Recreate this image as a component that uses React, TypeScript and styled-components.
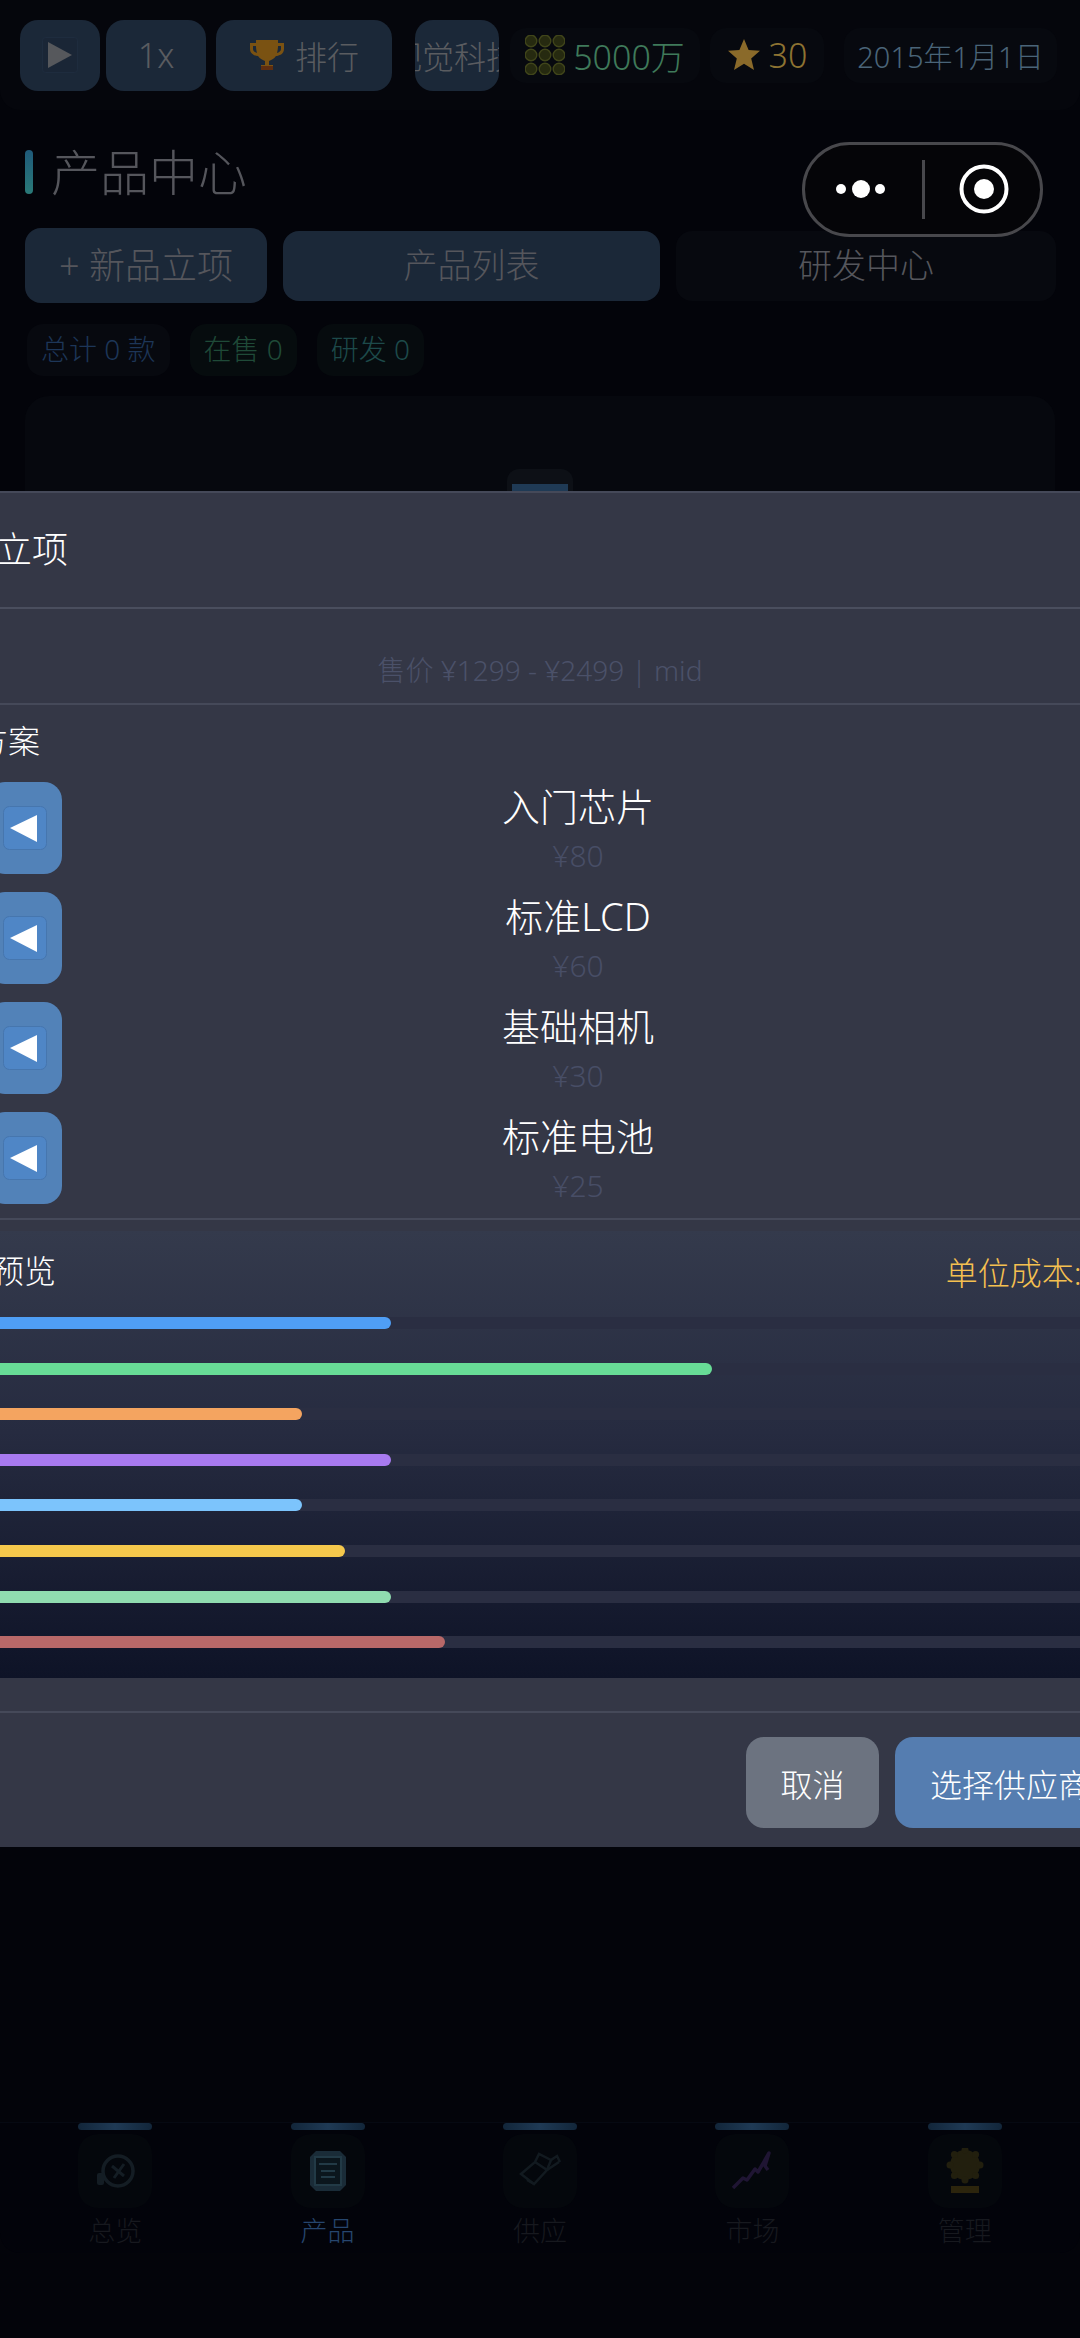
import React from 'react';
import styled, {createGlobalStyle} from 'styled-components';

const GlobalStyle = createGlobalStyle`
  html, body {
    margin: 0;
    padding: 0;
    background: #03040a;
    overflow: hidden;
  }
  * {
    box-sizing: border-box;
  }
  body {
    font-family: "Noto Sans", "Noto Sans CJK SC", sans-serif;
    font-weight: 300;
  }
`;

const Page = styled.div`
  position: relative;
  width: 1080px;
  height: 2338px;
  overflow: hidden;
  display: flex;
  flex-direction: column;
  background: #03040a;
`;

const TopBar = styled.div`
  height: 110px;
  flex: none;
  display: flex;
  align-items: center;
  padding-left: 20px;
  background: #05060c;
  border-radius: 0 0 20px 20px;
`;

const BarButton = styled.div<{$w: number; $ml?: number; $size?: number}>`
  width: ${p => p.$w}px;
  margin-left: ${p => p.$ml ?? 0}px;
  height: 71px;
  flex: none;
  display: flex;
  align-items: center;
  justify-content: center;
  gap: 10px;
  border-radius: 18px;
  background: #1b2838;
  color: #5a5c60;
  font-size: ${p => p.$size ?? 32}px;
  overflow: hidden;
  white-space: nowrap;
`;

const ScrollText = styled.span`
  margin-left: -6px;
`;

const StatPill = styled.div<{$w: number; $ml: number; $color: string}>`
  width: ${p => p.$w}px;
  margin-left: ${p => p.$ml}px;
  height: 55px;
  flex: none;
  display: flex;
  align-items: center;
  justify-content: center;
  gap: 8px;
  border-radius: 16px;
  background: #07090f;
  color: ${p => p.$color};
  font-size: 34px;
  white-space: nowrap;
`;

const DateText = styled.span`
  font-size: 29px;
`;

const TitleRow = styled.div`
  height: 44px;
  margin: 40px 0 0 25px;
  flex: none;
  display: flex;
  align-items: center;
  gap: 18px;
`;

const TitleMark = styled.div`
  width: 8px;
  height: 44px;
  border-radius: 4px;
  background: linear-gradient(180deg, #1f5a7a, #2a7a78);
`;

const TitleText = styled.div`
  font-size: 49px;
  line-height: 44px;
  color: #55565c;
`;

const TabRow = styled.div`
  margin: 34px 24px 0 25px;
  height: 75px;
  flex: none;
  display: flex;
  align-items: center;
  gap: 16px;
`;

const Tab = styled.div<{$w: number; $tall?: boolean; $dark?: boolean}>`
  width: ${p => p.$w}px;
  height: ${p => (p.$tall ? 75 : 70)}px;
  flex: none;
  display: flex;
  align-items: center;
  justify-content: center;
  padding-bottom: 4px;
  border-radius: 16px;
  background: ${p => (p.$dark ? '#07090f' : '#1b2838')};
  color: #55565c;
  font-size: ${p => (p.$tall ? 36 : 34)}px;
`;

const ChipRow = styled.div`
  margin: 21px 0 0 27px;
  height: 52px;
  flex: none;
  display: flex;
  gap: 20px;
`;

const Chip = styled.div<{$color: string; $bg: string}>`
  padding: 0 14px 4px;
  display: flex;
  align-items: center;
  border-radius: 16px;
  background: ${p => p.$bg};
  color: ${p => p.$color};
  font-size: 28px;
  white-space: pre;
`;

const EmptyCard = styled.div`
  margin: 20px 25px 0;
  height: 500px;
  flex: none;
  display: flex;
  justify-content: center;
  padding-top: 73px;
  border-radius: 24px;
  background: #06080e;
`;

const EmptyIcon = styled.div`
  width: 66px;
  height: 40px;
  display: flex;
  justify-content: center;
  padding-top: 15px;
  border-radius: 12px;
  background: #0d1016;
`;

const EmptyIconFill = styled.div`
  width: 56px;
  height: 25px;
  background: #1f3a55;
`;

const TabBar = styled.div`
  margin-top: auto;
  margin-bottom: 85px;
  height: 131px;
  flex: none;
  display: flex;
  padding: 0 9px;
  border-top: 1px solid #060912;
  border-radius: 0 0 20px 20px;
  background: #02030a;
`;

const TabItem = styled.div`
  flex: 1;
  display: flex;
  flex-direction: column;
  align-items: center;
`;

const TabIndicator = styled.div`
  width: 74px;
  height: 7px;
  flex: none;
  border-radius: 4px;
  background: linear-gradient(90deg, #12263a, #1f3a55, #12263a);
`;

const TabTile = styled.div`
  margin-top: 4px;
  width: 74px;
  height: 74px;
  flex: none;
  display: flex;
  align-items: center;
  justify-content: center;
  border-radius: 20px;
  background: #04070c;
`;

const TabLabel = styled.div<{$active?: boolean}>`
  margin-top: 5px;
  font-size: 27px;
  line-height: 36px;
  color: ${p => (p.$active ? '#26466e' : '#17191f')};
`;

const Capsule = styled.div`
  position: absolute;
  top: 142px;
  left: 802px;
  width: 241px;
  height: 95px;
  border-radius: 48px;
  border: 3px solid #48484c;
  background: #050508;
  z-index: 3;
`;

const Modal = styled.div`
  position: absolute;
  top: 491px;
  left: -120px;
  width: 1320px;
  height: 1356px;
  display: flex;
  flex-direction: column;
  background: #343746;
  border-top: 2px solid #454959;
  z-index: 2;
`;

const ModalHeader = styled.div`
  height: 116px;
  flex: none;
  display: flex;
  align-items: center;
  padding: 0 0 5px 44px;
  border-bottom: 2px solid #4a4e5e;
  color: #ffffff;
  font-size: 36px;
`;

const ModalInfo = styled.div`
  height: 96px;
  flex: none;
  display: flex;
  align-items: flex-end;
  justify-content: center;
  padding-bottom: 14px;
  border-bottom: 2px solid #454959;
  color: #4b5169;
  font-size: 28px;
`;

const Section = styled.div`
  flex: none;
  padding: 14px 0 0 32px;
  height: 515px;
  border-bottom: 2px solid #454959;
`;

const SectionLabel = styled.div`
  height: 44px;
  line-height: 44px;
  font-size: 32px;
  color: #ffffff;
`;

const OptionList = styled.div`
  margin-top: 19px;
  display: flex;
  flex-direction: column;
  gap: 18px;
`;

const OptionRow = styled.div`
  width: 1182px;
  margin-left: 75px;
  height: 92px;
  display: flex;
  align-items: center;
`;

const ArrowButton = styled.div`
  width: 75px;
  height: 92px;
  flex: none;
  display: flex;
  align-items: center;
  justify-content: center;
  border-radius: 18px;
  background: #5282b8;
`;

const OptionText = styled.div`
  flex: 1;
  display: flex;
  flex-direction: column;
  align-items: center;
  justify-content: flex-start;
  align-self: flex-start;
`;

const OptionName = styled.div`
  margin-top: -2px;
  font-size: 38px;
  line-height: 52px;
  color: #ffffff;
`;

const OptionPrice = styled.div`
  font-size: 30px;
  line-height: 48px;
  color: #484e66;
`;

const PreviewPanel = styled.div`
  margin-top: 11px;
  height: 447px;
  flex: none;
  padding: 18px 37px 0 48px;
  background: linear-gradient(180deg, #343a4c 0%, #262b40 45%, #0e1327 100%);
`;

const PreviewHead = styled.div`
  height: 44px;
  display: flex;
  align-items: center;
  justify-content: space-between;
  white-space: nowrap;
`;

const CostText = styled.div`
  font-size: 32px;
  color: #f5c050;
`;

const BarList = styled.div`
  margin-top: 24px;
  display: flex;
  flex-direction: column;
  gap: 33.6px;
`;

const BarTrack = styled.div`
  height: 12px;
  border-radius: 6px;
  background: #2a2e42;
  overflow: hidden;
`;

const BarFill = styled.div<{$color: string}>`
  height: 100%;
  border-radius: 6px;
  background: ${p => p.$color};
`;

const ModalFooter = styled.div`
  margin-top: 33px;
  flex: 1;
  display: flex;
  justify-content: flex-end;
  gap: 16px;
  padding: 24px 75px 0 0;
  border-top: 2px solid #454959;
`;

const FooterButton = styled.div<{$bg: string; $w: number}>`
  width: ${p => p.$w}px;
  height: 91px;
  display: flex;
  align-items: center;
  justify-content: center;
  border-radius: 18px;
  background: ${p => p.$bg};
  color: #ffffff;
  font-size: 32px;
`;

const PlayIcon = () => (
  <svg width="36" height="36" viewBox="0 0 36 36">
    <rect x="0.5" y="0.5" width="35" height="35" rx="3" fill="#1a2636" stroke="#1e2c3e" />
    <path d="M6 5 L30 18 L6 31 Z" fill="#56585c" />
  </svg>
);

const TrophyIcon = () => (
  <svg width="36" height="36" viewBox="0 0 36 36">
    <path
      d="M7 3 H29 V6 H35 V12 C35 17 30 19 27 19 C25 22 22 23 20 24 V28 H24 V33 H12 V28 H16 V24 C14 23 11 22 9 19 C6 19 1 17 1 12 V6 H7 Z M4 9 V12 C4 14 6 15.5 8 16 C7.4 14 7 11 7 9 Z M32 9 H29 C29 11 28.6 14 28 16 C30 15.5 32 14 32 12 Z"
      fill="#7a5212"
      fillRule="evenodd"
    />
    <rect x="12" y="29" width="12" height="4" fill="#5e2e10" />
  </svg>
);

const CoinsIcon = () => (
  <svg width="40" height="40" viewBox="0 0 40 40">
    {[6, 20, 34].map(y =>
      [6, 20, 34].map(x => (
        <circle
          key={`${x}-${y}`}
          cx={x}
          cy={y}
          r="5.8"
          fill="#262a10"
          stroke="#40451a"
          strokeWidth="1.4"
        />
      )),
    )}
  </svg>
);

const StarIcon = () => (
  <svg width="34" height="34" viewBox="0 0 34 34">
    <path
      d="M17 1 L21.6 12 L33 12.8 L24.2 20.4 L27 32 L17 25.8 L7 32 L9.8 20.4 L1 12.8 L12.4 12 Z"
      fill="#8a6a2a"
    />
  </svg>
);

const BackEmoji = () => (
  <svg width="44" height="44" viewBox="0 0 44 44">
    <rect x="0.5" y="0.5" width="43" height="43" rx="6" fill="#4f86c6" stroke="#4676ae" />
    <path d="M7 22 L34 9 V36 Z" fill="#ffffff" />
  </svg>
);

const GlobeIcon = () => (
  <svg width="46" height="46" viewBox="0 0 46 46" fill="none">
    <circle cx="26" cy="23" r="15" stroke="#141d24" strokeWidth="3.5" />
    <path d="M20 18 L32 28 M32 16 L22 30" stroke="#141d24" strokeWidth="3" />
    <rect x="5" y="25" width="7" height="12" rx="2" fill="#141d24" />
  </svg>
);

const WatchIcon = () => (
  <svg width="46" height="46" viewBox="0 0 46 46" fill="none">
    <path d="M11 3 H35 L41 9 V37 L35 43 H11 L5 37 V9 Z" fill="#1a2c38" />
    <rect x="10" y="9" width="26" height="28" fill="#0b161d" stroke="#223a46" strokeWidth="2" />
    <path d="M14 16 H32 M16 23 H30 M16 29 H30" stroke="#223a46" strokeWidth="2" />
  </svg>
);

const CrateIcon = () => (
  <svg width="46" height="46" viewBox="0 0 46 46" fill="none" stroke="#121a20" strokeWidth="2.5">
    <path d="M4 26 L18 14 L30 22 L17 36 Z" />
    <path d="M18 14 L22 6 L34 12 L30 22" />
    <path d="M30 22 L42 14 M34 12 L40 8 L43 14 M17 36 L10 32" />
  </svg>
);

const ChartIcon = () => (
  <svg width="46" height="46" viewBox="0 0 46 46" fill="none">
    <path
      d="M4 40 L14 30 L18 32 L26 21 L29 24 L40 5 L36 18 L39 22"
      stroke="#1f1533"
      strokeWidth="3.5"
      strokeLinejoin="round"
    />
  </svg>
);

const FlowerIcon = () => (
  <svg width="40" height="46" viewBox="0 0 40 46">
    <circle cx="20" cy="17" r="15" fill="#221f0e" />
    {[0, 45, 90, 135, 180, 225, 270, 315].map(a => (
      <circle
        key={a}
        cx={20 + 15 * Math.cos((a * Math.PI) / 180)}
        cy={17 + 15 * Math.sin((a * Math.PI) / 180)}
        r="3.5"
        fill="#221f0e"
      />
    ))}
    <rect x="6" y="38" width="28" height="7" fill="#2c250d" />
  </svg>
);

const options = [
  {name: '入门芯片', price: '¥80'},
  {name: '标准LCD', price: '¥60'},
  {name: '基础相机', price: '¥30'},
  {name: '标准电池', price: '¥25'},
];

const bars = [
  {color: '#4f9ef5', pct: 37.5},
  {color: '#68dc96', pct: 63.5},
  {color: '#f4a460', pct: 30.3},
  {color: '#a87af0', pct: 37.5},
  {color: '#7cc4fc', pct: 30.3},
  {color: '#f5c84c', pct: 33.8},
  {color: '#90dcb0', pct: 37.5},
  {color: '#b86868', pct: 41.9},
];

const navItems = [
  {label: '总览', icon: <GlobeIcon />},
  {label: '产品', icon: <WatchIcon />, active: true},
  {label: '供应', icon: <CrateIcon />},
  {label: '市场', icon: <ChartIcon />},
  {label: '管理', icon: <FlowerIcon />},
];

const App = () => {
  return (
    <Page>
      <GlobalStyle />
      <TopBar>
        <BarButton $w={80}>
          <PlayIcon />
        </BarButton>
        <BarButton $w={100} $ml={6} $size={34}>
          1x
        </BarButton>
        <BarButton $w={176} $ml={10}>
          <TrophyIcon />
          排行
        </BarButton>
        <BarButton $w={84} $ml={23}>
          <ScrollText>视觉科技</ScrollText>
        </BarButton>
        <StatPill $w={190} $ml={11} $color="#3f7a5a">
          <CoinsIcon />
          5000万
        </StatPill>
        <StatPill $w={114} $ml={10} $color="#8d7332">
          <StarIcon />
          30
        </StatPill>
        <StatPill $w={213} $ml={20} $color="#4a6478">
          <DateText>2015年1月1日</DateText>
        </StatPill>
      </TopBar>

      <TitleRow>
        <TitleMark />
        <TitleText>产品中心</TitleText>
      </TitleRow>

      <TabRow>
        <Tab $w={242} $tall>
          + 新品立项
        </Tab>
        <Tab $w={377}>产品列表</Tab>
        <Tab $w={380} $dark>
          研发中心
        </Tab>
      </TabRow>

      <ChipRow>
        <Chip $color="#1d3658" $bg="#07090f">
          总计 0 款
        </Chip>
        <Chip $color="#1f4a38" $bg="#060c0e">
          在售 0
        </Chip>
        <Chip $color="#1d4a4a" $bg="#060b0e">
          研发 0
        </Chip>
      </ChipRow>

      <EmptyCard>
        <EmptyIcon>
          <EmptyIconFill />
        </EmptyIcon>
      </EmptyCard>

      <TabBar>
        {navItems.map(item => (
          <TabItem key={item.label}>
            <TabIndicator />
            <TabTile>{item.icon}</TabTile>
            <TabLabel $active={item.active}>{item.label}</TabLabel>
          </TabItem>
        ))}
      </TabBar>

      <Capsule>
        <svg width="235" height="89" viewBox="0 0 235 89">
          <circle cx="36" cy="44" r="5" fill="#ffffff" />
          <circle cx="56" cy="44" r="9" fill="#ffffff" />
          <circle cx="75" cy="44" r="5" fill="#ffffff" />
          <rect x="117" y="15" width="3" height="59" fill="#48484c" />
          <circle cx="179" cy="44" r="22.5" fill="none" stroke="#ffffff" strokeWidth="4" />
          <circle cx="179" cy="44" r="10" fill="#ffffff" />
        </svg>
      </Capsule>

      <Modal>
        <ModalHeader>新品立项</ModalHeader>
        <ModalInfo>售价 ¥1299 - ¥2499 | mid</ModalInfo>
        <Section>
          <SectionLabel>配置方案</SectionLabel>
          <OptionList>
            {options.map(option => (
              <OptionRow key={option.name}>
                <ArrowButton>
                  <BackEmoji />
                </ArrowButton>
                <OptionText>
                  <OptionName>{option.name}</OptionName>
                  <OptionPrice>{option.price}</OptionPrice>
                </OptionText>
                <ArrowButton />
              </OptionRow>
            ))}
          </OptionList>
        </Section>
        <PreviewPanel>
          <PreviewHead>
            <SectionLabel>配置预览</SectionLabel>
            <CostText>单位成本: ¥195</CostText>
          </PreviewHead>
          <BarList>
            {bars.map(bar => (
              <BarTrack key={bar.color}>
                <BarFill $color={bar.color} style={{width: `${bar.pct}%`}} />
              </BarTrack>
            ))}
          </BarList>
        </PreviewPanel>
        <ModalFooter>
          <FooterButton $bg="#6c7380" $w={133}>
            取消
          </FooterButton>
          <FooterButton $bg="#557db0" $w={230}>
            选择供应商
          </FooterButton>
        </ModalFooter>
      </Modal>
    </Page>
  );
};

export default App;
